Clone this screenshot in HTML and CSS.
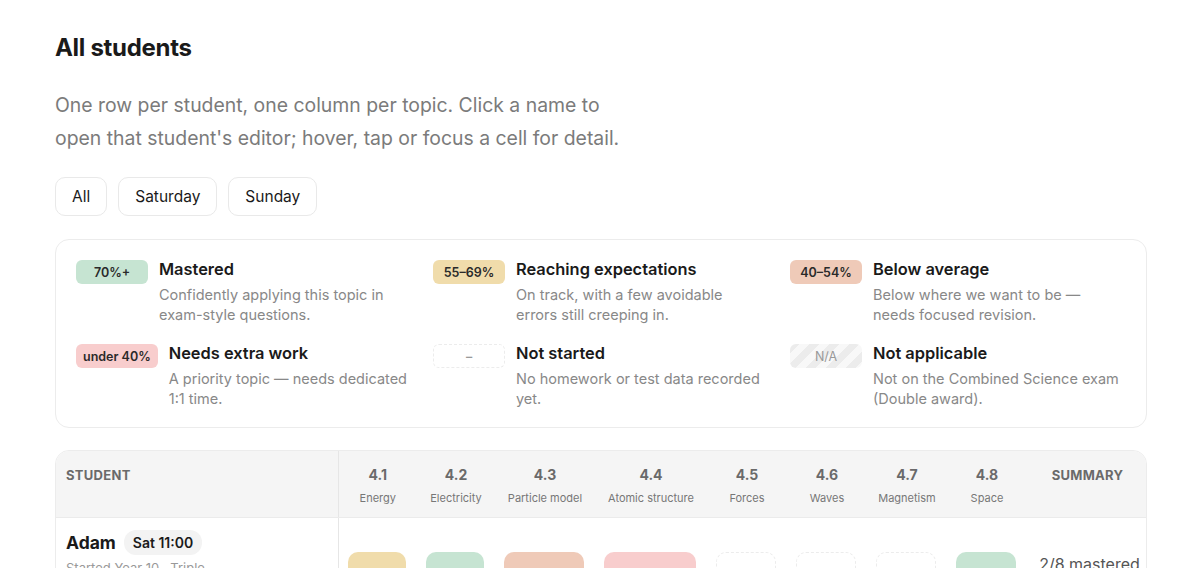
FILE: index.html
```html
<!doctype html>
<html>
    <head>
        <title>All students</title>
        <link rel="stylesheet" href="styles.css">
    </head>
    <body>
        <main>
            <h1>All students</h1>
            <p class="intro">One row per student, one column per topic. Click a name to open that student's editor; hover, tap or focus a cell for detail.</p>

            <nav class="filters">
                <button class="filter">All</button>
                <button class="filter">Saturday</button>
                <button class="filter">Sunday</button>
            </nav>

            <section class="legend">
                <div class="item">
                    <span class="badge mastered">70%+</span>
                    <div>
                        <div class="label">Mastered</div>
                        <div class="desc">Confidently applying this topic in exam-style questions.</div>
                    </div>
                </div>
                <div class="item">
                    <span class="badge reaching">55–69%</span>
                    <div>
                        <div class="label">Reaching expectations</div>
                        <div class="desc">On track, with a few avoidable errors still creeping in.</div>
                    </div>
                </div>
                <div class="item">
                    <span class="badge below">40–54%</span>
                    <div>
                        <div class="label">Below average</div>
                        <div class="desc">Below where we want to be — needs focused revision.</div>
                    </div>
                </div>
                <div class="item">
                    <span class="badge extra">under 40%</span>
                    <div>
                        <div class="label">Needs extra work</div>
                        <div class="desc">A priority topic — needs dedicated 1:1 time.</div>
                    </div>
                </div>
                <div class="item">
                    <span class="badge empty">–</span>
                    <div>
                        <div class="label">Not started</div>
                        <div class="desc">No homework or test data recorded yet.</div>
                    </div>
                </div>
                <div class="item">
                    <span class="badge na">N/A</span>
                    <div>
                        <div class="label">Not applicable</div>
                        <div class="desc">Not on the Combined Science exam (Double award).</div>
                    </div>
                </div>
            </section>

            <div class="grid-wrap">
                <table class="grid">
                    <colgroup>
                        <col style="width: 282px">
                        <col style="width: 79px">
                        <col style="width: 78px">
                        <col style="width: 100px">
                        <col style="width: 112px">
                        <col style="width: 80px">
                        <col style="width: 80px">
                        <col style="width: 80px">
                        <col style="width: 80px">
                        <col style="width: 121px">
                    </colgroup>
                    <thead>
                        <tr>
                            <th class="student-head">Student</th>
                            <th><div class="num">4.1</div><div class="topic">Energy</div></th>
                            <th><div class="num">4.2</div><div class="topic">Electricity</div></th>
                            <th><div class="num">4.3</div><div class="topic">Particle model</div></th>
                            <th><div class="num">4.4</div><div class="topic">Atomic structure</div></th>
                            <th><div class="num">4.5</div><div class="topic">Forces</div></th>
                            <th><div class="num">4.6</div><div class="topic">Waves</div></th>
                            <th><div class="num">4.7</div><div class="topic">Magnetism</div></th>
                            <th><div class="num">4.8</div><div class="topic">Space</div></th>
                            <th class="summary-head">Summary</th>
                        </tr>
                    </thead>
                    <tbody>
                        <tr>
                            <td class="student">
                                <div class="who"><a class="name" href="#">Adam</a> <span class="slot">Sat 11:00</span></div>
                                <div class="meta">Started Year 10 · Triple<br>award</div>
                            </td>
                            <td><span class="cell reaching">62%</span></td>
                            <td><span class="cell mastered">74%</span></td>
                            <td><span class="cell below">48%</span></td>
                            <td><span class="cell extra">31%</span></td>
                            <td><span class="cell empty"></span></td>
                            <td><span class="cell empty"></span></td>
                            <td><span class="cell empty"></span></td>
                            <td><span class="cell mastered">81%</span></td>
                            <td class="summary">2/8 mastered<br><span class="sub">1 needs work</span></td>
                        </tr>
                    </tbody>
                </table>
            </div>
        </main>
    </body>
</html>
```

FILE: styles.css
```css
html {
    background: white;
    font-family: Inter, "Noto Sans", sans-serif;
    color: #1a1a1a;
}
body {
    margin: 0;
}
main {
    padding: 34px 53px 40px 55px;
}
h1 {
    margin: 0;
    font-size: 24px;
    line-height: 28px;
    font-weight: 700;
    letter-spacing: -0.3px;
}
.intro {
    margin: 27px 0 0;
    max-width: 575px;
    font-size: 19.4px;
    line-height: 33px;
    color: #7b7b7b;
}

.filters {
    display: flex;
    gap: 11px;
    margin-top: 22px;
}
.filter {
    font: inherit;
    font-size: 15.5px;
    color: #1a1a1a;
    background: white;
    border: 1px solid #e9e9e9;
    border-radius: 10px;
    height: 39px;
    padding: 0 16px;
}

.legend {
    margin-top: 23px;
    border: 1px solid #ececec;
    border-radius: 14px;
    padding: 19px 20px 18px;
    display: grid;
    grid-template-columns: repeat(3, 333px);
    column-gap: 24px;
    row-gap: 18px;
}
.legend .item {
    display: flex;
    gap: 11px;
    align-items: flex-start;
}
.legend .label {
    font-size: 16.4px;
    line-height: 20px;
    font-weight: 600;
}
.legend .desc {
    margin-top: 6px;
    font-size: 14.5px;
    line-height: 20px;
    color: #888;
}
.badge {
    flex: none;
    box-sizing: border-box;
    min-width: 72px;
    height: 24px;
    margin-top: 1px;
    padding: 0 7px;
    border-radius: 6px;
    font-size: 12.5px;
    font-weight: 600;
    color: #2a2a2a;
    display: flex;
    align-items: center;
    justify-content: center;
}

.mastered { background: #c6e4d2; }
.reaching { background: #f0dcab; }
.below { background: #efcab8; }
.extra { background: #f8cdcd; }
.empty {
    background: white;
    border: 1px dashed #ececec;
    color: #999;
}
.na {
    background: repeating-linear-gradient(135deg, #ececec 0 7px, #f8f8f8 7px 14px);
    color: #999;
    font-weight: 400;
}

.grid-wrap {
    margin-top: 22px;
    border: 1px solid #ececec;
    border-radius: 14px;
    overflow: hidden;
}
.grid {
    width: 100%;
    table-layout: fixed;
    border-collapse: collapse;
}
.grid thead th {
    background: #f5f5f5;
    border-bottom: 1px solid #ebebeb;
    padding: 14px 4px 12px;
    vertical-align: top;
    text-align: center;
    color: #6a6a6a;
}
.grid .num {
    font-size: 14px;
    line-height: 20px;
    font-weight: 700;
}
.grid .topic {
    margin-top: 6px;
    font-size: 11px;
    line-height: 14px;
    font-weight: 400;
    color: #777;
    white-space: nowrap;
}
.grid .student-head,
.grid .summary-head {
    font-size: 13px;
    line-height: 20px;
    font-weight: 700;
    letter-spacing: 0.3px;
    text-transform: uppercase;
}
.grid .student-head {
    text-align: left;
    padding-left: 10px;
    border-right: 1px solid #e6e6e6;
}
.grid td {
    padding: 0 11px 0 9px;
    vertical-align: middle;
}
.grid td.student {
    padding: 12px 10px 39px;
    vertical-align: top;
    border-right: 1px solid #e6e6e6;
}
.who {
    display: flex;
    align-items: center;
    gap: 8px;
}
.who .name {
    font-size: 17.5px;
    font-weight: 700;
    color: #1a1a1a;
    text-decoration: none;
}
.slot {
    background: #f3f3f3;
    border-radius: 12px;
    height: 25px;
    padding: 0 9px;
    display: flex;
    align-items: center;
    font-size: 14px;
    font-weight: 600;
}
.meta {
    margin-top: 4px;
    font-size: 13px;
    line-height: 18px;
    color: #999;
}
.cell {
    display: flex;
    align-items: center;
    justify-content: center;
    box-sizing: border-box;
    height: 48px;
    border-radius: 10px;
    font-size: 13px;
    font-weight: 600;
    color: #2a2a2a;
}
.grid td.summary {
    padding: 0 4px 0 8px;
    text-align: center;
    font-size: 16px;
    line-height: 22px;
    color: #555;
}
.summary .sub {
    font-size: 12px;
    color: #999;
}
```
